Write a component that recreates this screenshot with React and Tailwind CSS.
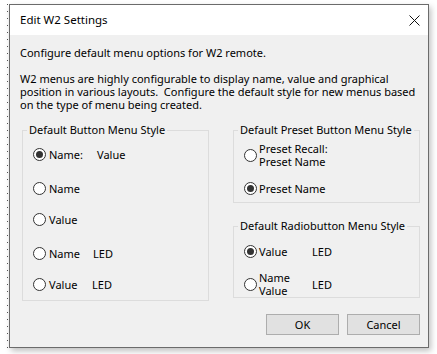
const font = { fontFamily: '"Noto Sans", "Open Sans", sans-serif' };

const Radio = ({ checked }) => (
  <span className="flex h-[13px] w-[13px] shrink-0 items-center justify-center rounded-full border border-[#333] bg-white">
    {checked && <span className="h-[7px] w-[7px] rounded-full bg-[#333]" />}
  </span>
);

const Group = ({ title, className, children }) => (
  <fieldset className={`border border-[#dcdcdc] ${className}`}>
    <legend className="ml-[4px] px-[2px] leading-[14px]">{title}</legend>
    {children}
  </fieldset>
);

export default function App() {
  return (
    <div
      className="flex h-[354px] w-[437px] overflow-hidden bg-white pt-[4px] text-[11px] text-black"
      style={font}
    >
      {/* dotted guide on the desktop */}
      <div className="ml-[7px] h-[344px] w-px bg-[repeating-linear-gradient(to_bottom,#555_0_1px,transparent_1px_7px)]" />

      <div className="ml-[1px] flex h-[344px] w-[420px] flex-col overflow-hidden border border-[#6b6b6b] bg-[#f0f0f0] shadow-[2px_3px_6px_rgba(0,0,0,0.25)]">
        {/* Title bar */}
        <div className="flex h-[30px] shrink-0 items-center bg-white pl-[10px]">
          <span className="text-[11.5px]">Edit W2 Settings</span>
          <svg className="ml-auto mr-[8px]" width="11" height="11" viewBox="0 0 11 11">
            <path d="M0.5 0.5 L10.5 10.5 M10.5 0.5 L0.5 10.5" stroke="#111" strokeWidth="1" fill="none" />
          </svg>
        </div>

        {/* Body */}
        <div className="flex flex-1 flex-col pl-[10px] pr-[8px] pt-[11px] leading-[13px]">
          <p>Configure default menu options for W2 remote.</p>
          <p className="mt-[13px] whitespace-nowrap">
            W2 menus are highly configurable to display name, value and graphical
            <br />
            position in various layouts.&nbsp; Configure the default style for new menus based
            <br />
            on the type of menu being created.
          </p>

          <div className="mt-[12px] flex items-start justify-between pl-[2px]">
            <Group title="Default Button Menu Style" className="w-[187px] pb-[6px]">
              <div className="mt-[7px] flex h-[20px] items-center pl-[10px]">
                <Radio checked />
                <span className="ml-[3px] w-[48px]">Name:</span>
                <span>Value</span>
              </div>
              <div className="mt-[14px] flex h-[20px] items-center pl-[10px]">
                <Radio />
                <span className="ml-[3px]">Name</span>
              </div>
              <div className="mt-[11px] flex h-[20px] items-center pl-[10px]">
                <Radio />
                <span className="ml-[3px]">Value</span>
              </div>
              <div className="mt-[14px] flex h-[20px] items-center pl-[10px]">
                <Radio />
                <span className="ml-[3px] w-[44px]">Name</span>
                <span>LED</span>
              </div>
              <div className="mt-[11px] flex h-[20px] items-center pl-[10px]">
                <Radio />
                <span className="ml-[3px] w-[43px]">Value</span>
                <span>LED</span>
              </div>
            </Group>

            <div className="flex flex-col">
              <Group title="Default Preset Button Menu Style" className="w-[187px] pb-[4px]">
                <div className="mt-[5px] flex h-[26px] items-center pl-[10px]">
                  <Radio />
                  <span className="ml-[2px]">
                    Preset Recall:
                    <br />
                    Preset Name
                  </span>
                </div>
                <div className="mt-[10px] flex h-[20px] items-center pl-[10px]">
                  <Radio checked />
                  <span className="ml-[2px]">Preset Name</span>
                </div>
              </Group>

              <Group title="Default Radiobutton Menu Style" className="mt-[16px] w-[187px]">
                <div className="mt-[8px] flex h-[20px] items-center pl-[10px]">
                  <Radio checked />
                  <span className="ml-[2px] w-[53px]">Value</span>
                  <span>LED</span>
                </div>
                <div className="mt-[10px] flex h-[26px] items-center pl-[10px]">
                  <Radio />
                  <span className="ml-[2px] w-[53px]">
                    Name
                    <br />
                    Value
                  </span>
                  <span>LED</span>
                </div>
              </Group>
            </div>
          </div>

          <div className="mt-[13px] flex justify-end gap-[8px]">
            <button className="h-[21px] w-[73px] border border-[#adadad] bg-[#e1e1e1] leading-[19px]">OK</button>
            <button className="h-[21px] w-[73px] border border-[#adadad] bg-[#e1e1e1] leading-[19px]">Cancel</button>
          </div>
        </div>
      </div>
    </div>
  );
}
